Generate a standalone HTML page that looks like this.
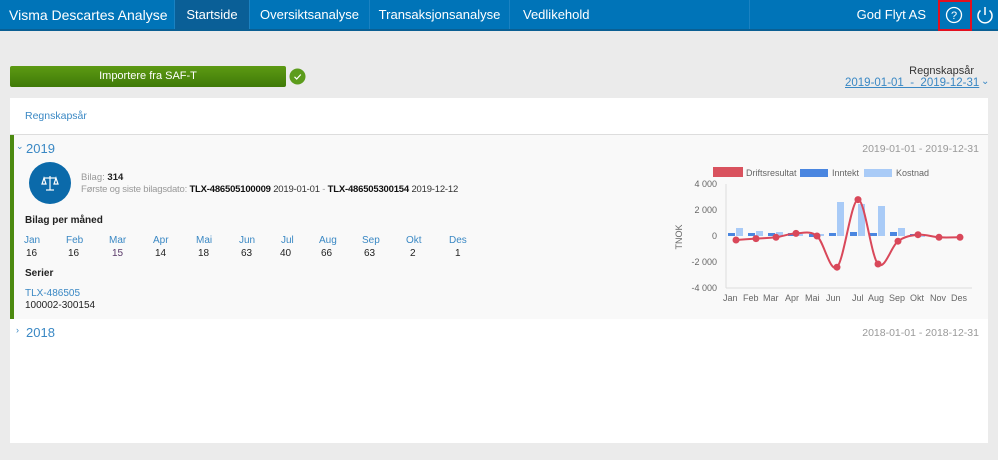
<!DOCTYPE html>
<html><head><meta charset="utf-8"><style>
*{margin:0;padding:0;box-sizing:border-box}
body{width:998px;height:460px;background:#ebebeb;font-family:"Liberation Sans",sans-serif;position:relative;overflow:hidden;font-size:10px;color:#222}
.nav{position:absolute;left:0;top:0;width:998px;height:31px;background:#0074b8;border-bottom:2px solid #0a5f93;color:#fff}
.nav div{position:absolute;top:0;height:29px;line-height:30px;font-size:13px;border-right:1px solid #1a82c2;white-space:nowrap;overflow:hidden}
.abs{position:absolute;white-space:nowrap}
.blue{color:#3a88c4}
</style></head><body>
<div class="nav">
 <div style="left:0;width:175px;padding-left:9px;font-size:14px">Visma Descartes Analyse</div>
 <div style="left:175px;width:75px;background:#0a5f97;text-align:center">Startside</div>
 <div style="left:250px;width:120px;text-align:center">Oversiktsanalyse</div>
 <div style="left:370px;width:140px;text-align:center">Transaksjonsanalyse</div>
 <div style="left:510px;width:240px;padding-left:13px;border-right:1px solid #1a82c2">Vedlikehold</div>
 <div style="left:750px;width:188px;text-align:right;padding-right:12px;border:none">God Flyt AS</div>
</div>
<div class="abs" style="left:938px;top:0;width:34px;height:31px;border:2px solid #e3101f"></div>
<svg class="abs" style="left:944px;top:5px" width="22" height="20"><circle cx="10" cy="10" r="7.5" fill="none" stroke="#fff" stroke-width="1.3"/><text x="10" y="14" font-size="11" fill="#fff" text-anchor="middle" font-family="Liberation Sans">?</text></svg>
<svg class="abs" style="left:974px;top:4px" width="22" height="22"><path d="M6.5 6.5 A7 7 0 1 0 15.5 6.5" fill="none" stroke="#fff" stroke-width="1.5"/><line x1="11" y1="3" x2="11" y2="11" stroke="#fff" stroke-width="1.5"/></svg>

<div class="abs" style="left:10px;top:66px;width:276px;height:21px;background:linear-gradient(#5d9a13,#3f7a08);border-radius:2px;color:#fff;text-align:center;line-height:21px;font-size:11px">Importere fra SAF-T</div>
<svg class="abs" style="left:289px;top:68px" width="18" height="18"><circle cx="8.5" cy="8.5" r="8" fill="#5c9c1c"/><path d="M5.5 8.8 L7.7 11 L11.8 6.5" stroke="#fff" stroke-width="1.2" fill="none"/></svg>
<div class="abs" style="right:24px;top:65px;font-size:11px;color:#333">Regnskapsår</div>
<div class="abs blue" style="left:845px;top:77px;font-size:11.5px;text-decoration:underline">2019-01-01 &nbsp;-&nbsp; 2019-12-31</div>
<div class="abs blue" style="left:981px;top:76px;font-size:10px">⌄</div>

<div class="abs" style="left:10px;top:98px;width:978px;height:345px;background:#fff"></div>
<div class="abs blue" style="left:25px;top:110px;font-size:10.5px">Regnskapsår</div>
<div class="abs" style="left:10px;top:134px;width:978px;height:1px;background:#ddd"></div>
<div class="abs" style="left:10px;top:135px;width:978px;height:184px;background:#f9f9f9;border-left:4px solid #4c8a10"></div>
<div class="abs blue" style="left:16px;top:141px;font-size:9px">⌄</div>
<div class="abs blue" style="left:26px;top:141px;font-size:13px">2019</div>
<div class="abs" style="right:19px;top:143px;color:#999;font-size:10.5px">2019-01-01 - 2019-12-31</div>
<svg class="abs" style="left:29px;top:162px" width="42" height="42"><circle cx="21" cy="21" r="21" fill="#0b6aaa"/><g stroke="#fff" stroke-width="1.2" fill="none"><line x1="21" y1="14" x2="21" y2="28"/><line x1="15" y1="16" x2="27" y2="16"/><line x1="17" y1="28" x2="25" y2="28"/><path d="M15 16 L13 22 L17 22 Z M27 16 L25 22 L29 22 Z"/></g></svg>
<div class="abs" style="left:81px;top:172px;color:#999;font-size:9.5px">Bilag: <b style="color:#222">314</b></div>
<div class="abs" style="left:81px;top:184px;color:#999;font-size:9.5px;letter-spacing:-0.2px">Første og siste bilagsdato: <b style="color:#111">TLX-486505100009</b> <span style="color:#333">2019-01-01</span> - <b style="color:#111">TLX-486505300154</b> <span style="color:#333">2019-12-12</span></div>
<div class="abs" style="left:25px;top:215px;font-weight:bold;font-size:10px">Bilag per måned</div>
<div class="abs" style="left:0;top:235px;width:500px">
<div class="abs blue" style="left:24px">Jan</div><div class="abs" style="left:26px;top:13px">16</div>
<div class="abs blue" style="left:66px">Feb</div><div class="abs" style="left:68px;top:13px">16</div>
<div class="abs blue" style="left:109px">Mar</div><div class="abs" style="left:112px;top:13px;color:#5a3a6a">15</div>
<div class="abs blue" style="left:153px">Apr</div><div class="abs" style="left:155px;top:13px">14</div>
<div class="abs blue" style="left:196px">Mai</div><div class="abs" style="left:198px;top:13px">18</div>
<div class="abs blue" style="left:239px">Jun</div><div class="abs" style="left:241px;top:13px">63</div>
<div class="abs blue" style="left:281px">Jul</div><div class="abs" style="left:280px;top:13px">40</div>
<div class="abs blue" style="left:319px">Aug</div><div class="abs" style="left:321px;top:13px">66</div>
<div class="abs blue" style="left:362px">Sep</div><div class="abs" style="left:364px;top:13px">63</div>
<div class="abs blue" style="left:406px">Okt</div><div class="abs" style="left:410px;top:13px">2</div>
<div class="abs blue" style="left:449px">Des</div><div class="abs" style="left:455px;top:13px">1</div>
</div>
<div class="abs" style="left:25px;top:268px;font-weight:bold">Serier</div>
<div class="abs blue" style="left:25px;top:288px">TLX-486505</div>
<div class="abs" style="left:25px;top:300px">100002-300154</div>

<svg class="abs" style="left:660px;top:150px" width="338" height="160" font-family="Liberation Sans" font-size="9" fill="#666">
<rect x="53" y="17" width="30" height="10" fill="#d9525e"/><text x="86" y="26">Driftsresultat</text>
<rect x="140" y="19" width="28" height="8" fill="#4a86e0"/><text x="172" y="26">Inntekt</text>
<rect x="204" y="19" width="28" height="8" fill="#a9cbf7"/><text x="236" y="26">Kostnad</text>
<g text-anchor="end"><text x="57" y="37">4 000</text><text x="57" y="63">2 000</text><text x="57" y="89">0</text><text x="57" y="115">-2 000</text><text x="57" y="141">-4 000</text></g>
<text transform="translate(22,87) rotate(-90)" text-anchor="middle">TNOK</text>
<line x1="66" y1="34" x2="66" y2="138" stroke="#ddd"/><line x1="66" y1="138" x2="312" y2="138" stroke="#ddd"/>
<g fill="#4a86e0"><rect x="68" y="83" width="7" height="3"/><rect x="88" y="83" width="7" height="3"/><rect x="108" y="83" width="7" height="3"/><rect x="128" y="83" width="7" height="3"/><rect x="149" y="84" width="7" height="3"/><rect x="169" y="83" width="7" height="3"/><rect x="190" y="82" width="7" height="4"/><rect x="210" y="83" width="7" height="3"/><rect x="230" y="82" width="7" height="4"/><rect x="250" y="84" width="7" height="2"/></g>
<g fill="#a9cbf7"><rect x="76" y="78" width="7" height="8"/><rect x="96" y="81" width="7" height="5"/><rect x="116" y="82" width="7" height="4"/><rect x="136" y="84" width="7" height="2"/><rect x="157" y="84" width="7" height="2"/><rect x="177" y="52" width="7" height="34"/><rect x="198" y="54" width="7" height="32"/><rect x="218" y="56" width="7" height="30"/><rect x="238" y="78" width="7" height="8"/><rect x="258" y="86" width="7" height="1"/></g>
<path transform="translate(-660,-150)" d="M736,240 C742.8,239.5 749.2,239.05 756,238.6 C762.8,238.15 769.2,238.17 776,237.3 C782.8,236.43 789.2,233.6 796,233.4 C802.8,233.2 810.2,230.4 817,236 C823.8,241.6 830.2,273.3 837,267.2 C843.8,261.1 851.2,200.1 858,199.6 C864.8,199.1 871.2,257.1 878,264 C884.8,270.9 891.2,246.1 898,241.2 C904.8,236.3 911.2,235.35 918,234.7 C924.8,234.05 932.2,236.87 939,237.3 C945.8,237.73 953.2,237.3 960,237.3" fill="none" stroke="#d9485a" stroke-width="2"/>
<g fill="#d9485a"><circle cx="76" cy="90" r="3.5"/><circle cx="96" cy="88.6" r="3.5"/><circle cx="116" cy="87.3" r="3.5"/><circle cx="136" cy="83.4" r="3.5"/><circle cx="157" cy="86" r="3.5"/><circle cx="177" cy="117.2" r="3.5"/><circle cx="198" cy="49.6" r="3.5"/><circle cx="218" cy="114" r="3.5"/><circle cx="238" cy="91.2" r="3.5"/><circle cx="258" cy="84.7" r="3.5"/><circle cx="279" cy="87.3" r="3.5"/><circle cx="300" cy="87.3" r="3.5"/></g>
<g font-size="9"><text x="63" y="151">Jan</text><text x="83" y="151">Feb</text><text x="103" y="151">Mar</text><text x="125" y="151">Apr</text><text x="145" y="151">Mai</text><text x="166" y="151">Jun</text><text x="192" y="151">Jul</text><text x="208" y="151">Aug</text><text x="229" y="151">Sep</text><text x="250" y="151">Okt</text><text x="270" y="151">Nov</text><text x="291" y="151">Des</text></g>
</svg>

<div class="abs blue" style="left:16px;top:325px;font-size:9px">›</div>
<div class="abs blue" style="left:26px;top:325px;font-size:13px">2018</div>
<div class="abs" style="right:19px;top:327px;color:#999;font-size:10.5px">2018-01-01 - 2018-12-31</div>
</body></html>
